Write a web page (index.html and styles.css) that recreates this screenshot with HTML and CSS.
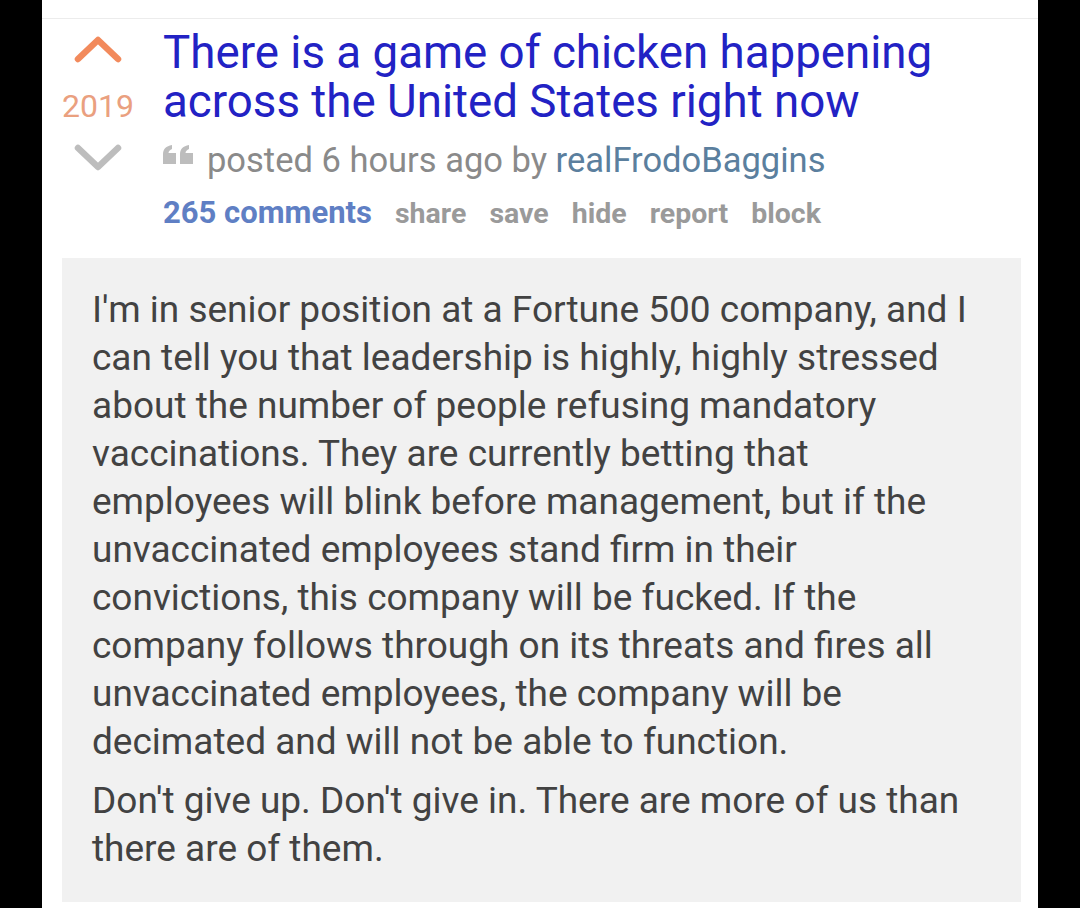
FILE: index.html
```html
<!DOCTYPE html>
<html lang="en">
<head>
<meta charset="utf-8">
<title>There is a game of chicken happening across the United States right now</title>
<link rel="stylesheet" href="styles.css">
</head>
<body>
<div class="page">
  <div class="topline"></div>
  <div class="post">
    <div class="votes">
      <svg class="arrow up" width="50" height="28" viewBox="0 0 50 28"><path d="M5 24 L25 5 L45 24" fill="none" stroke="#f28a5c" stroke-width="6.5" stroke-linecap="round" stroke-linejoin="round"/></svg>
      <div class="score">2019</div>
      <svg class="arrow down" width="50" height="28" viewBox="0 0 50 28"><path d="M5 4 L25 23 L45 4" fill="none" stroke="#bdbdbd" stroke-width="6.5" stroke-linecap="round" stroke-linejoin="round"/></svg>
    </div>
    <div class="main">
      <h1 class="title">There is a game of chicken happening across the United States right now</h1>
      <div class="meta">
        <svg class="quote" width="30" height="19" viewBox="0 0 30 19"><path d="M0 19 V9 C0 4 3 1 9 0 V4 C7 5 5.5 6 5.5 8 H13 V19 Z M17 19 V9 C17 4 20 1 26 0 V4 C24 5 22.5 6 22.5 8 H30 V19 Z" fill="#bdbdbd"/></svg>
        <span class="posted">posted 6 hours ago by <span class="author">realFrodoBaggins</span></span>
      </div>
      <div class="actions">
        <span class="comments">265 comments</span>
        <span class="act">share</span>
        <span class="act">save</span>
        <span class="act">hide</span>
        <span class="act">report</span>
        <span class="act">block</span>
      </div>
    </div>
  </div>
  <div class="selftext">
    <p>I'm in senior position at a Fortune 500 company, and I can tell you that leadership is highly, highly stressed about the number of people refusing mandatory vaccinations. They are currently betting that employees will blink before management, but if the unvaccinated employees stand firm in their convictions, this company will be fucked. If the company follows through on its threats and fires all unvaccinated employees, the company will be decimated and will not be able to function.</p>
    <p>Don't give up. Don't give in. There are more of us than there are of them.</p>
  </div>
</div>
</body>
</html>
```

FILE: styles.css
```css
html, body {
  margin: 0;
  padding: 0;
  background: #000;
  height: 100%;
}
body {
  font-family: Roboto, "Liberation Sans", Arial, sans-serif;
}
.page {
  width: 996px;
  margin: 0 auto;
  background: #fff;
  min-height: 908px;
  padding-top: 18px;
  box-sizing: border-box;
  overflow: hidden;
}
.topline {
  height: 1px;
  background: #ececec;
}
.post {
  display: flex;
  padding-top: 9px;
}
.votes {
  width: 112px;
  flex: none;
  display: flex;
  flex-direction: column;
  align-items: center;
}
.arrow.up {
  margin-top: 7px;
}
.score {
  font-size: 32px;
  line-height: 36px;
  color: #eaa07f;
  margin-top: 25px;
}
.arrow.down {
  margin-top: 20px;
}
.main {
  margin-left: 9px;
  flex: 1;
  min-width: 0;
}
.title {
  margin: 0;
  font-size: 45.7px;
  font-weight: 400;
  line-height: 49px;
  color: #2222c4;
}
.meta {
  margin-top: 16px;
  font-size: 34.5px;
  line-height: 36px;
  color: #8a8a8a;
  display: flex;
  align-items: flex-start;
  white-space: nowrap;
}
.quote {
  flex: none;
  margin-right: 14px;
  margin-top: 3px;
}
.author {
  color: #5b7f9e;
}
.actions {
  margin-top: 17px;
  font-size: 28.5px;
  line-height: 36px;
  height: 36px;
  font-weight: 700;
  color: #9a9a9a;
  display: flex;
  align-items: baseline;
  gap: 23px;
}
.comments {
  font-size: 31px;
  color: #5f7fc4;
}
.selftext {
  margin: 27px 17px 0 20px;
  background: #f1f1f1;
  padding: 28px 30px 29px 30px;
  color: #424242;
  font-size: 37px;
  line-height: 48px;
}
.selftext p {
  margin: 0;
}
.selftext p + p {
  margin-top: 11px;
}
```
